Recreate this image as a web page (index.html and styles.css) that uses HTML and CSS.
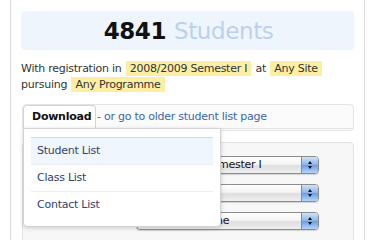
FILE: index.html
```html
<!DOCTYPE html>
<html>
<head>
<meta charset="utf-8">
<link rel="stylesheet" href="styles.css">
</head>
<body>
<div class="page">
  <div class="stat"><span class="stat-num">4841</span><span class="stat-label">Students</span></div>
  <p class="info">With registration in <span class="hl">2008/2009 Semester I</span> at <span class="hl">Any Site</span><br>pursuing <span class="hl">Any Programme</span></p>
  <div class="tabs">
    <div class="tabstrip">
      <div class="tab">Download</div>
      <a class="older">- or go to older student list page</a>
    </div>
    <div class="menu">
      <div class="menu-item active">Student List</div>
      <div class="menu-item">Class List</div>
      <div class="menu-item">Contact List</div>
    </div>
  </div>
  <div class="form">
    <span class="label">Semester</span>
    <div class="select"><span class="select-text">2008/2009 Semester I</span><span class="cap"><i class="up"></i><i class="down"></i></span></div>
    <span class="label">Site</span>
    <div class="select"><span class="select-text">Any Site</span><span class="cap"><i class="up"></i><i class="down"></i></span></div>
    <span class="label">Programme</span>
    <div class="select"><span class="select-text">Any Programme</span><span class="cap"><i class="up"></i><i class="down"></i></span></div>
  </div>
</div>
</body>
</html>
```
FILE: styles.css
```css
* { box-sizing: border-box; }
body {
  margin: 0;
  background: #fff;
  font-family: "DejaVu Sans", "Lucida Grande", sans-serif;
  font-size: 11px;
  letter-spacing: -0.25px;
  color: #333;
}
.page {
  margin-left: 10px;
  width: 355px;
  height: 240px;
  border-left: 1px solid #dcdcdc;
  border-right: 1px solid #dcdcdc;
  padding: 11px 10px 0;
  overflow: hidden;
}
.stat {
  height: 39px;
  background: #eff5fd;
  border-radius: 4px;
  display: flex;
  justify-content: center;
  align-items: center;
  gap: 8px;
  font-size: 23px;
  letter-spacing: -0.4px;
  padding-left: 2px;
}
.stat-num { font-weight: bold; color: #111; }
.stat-label { color: #b9d2ef; }
.info {
  margin: 11px 0 0;
  line-height: 16px;
  color: #333;
}
.hl {
  background: #fcefa4;
  padding: 1px 4px;
  margin: 0 1px;
}
.tabs {
  position: relative;
  margin-top: 11px;
  margin-left: 1px;
  border: 1px solid #e4e4e4;
  border-radius: 4px;
  background: #fbfbfb;
  padding-bottom: 1px;
}
.tabstrip {
  display: flex;
  height: 24px;
  border-bottom: 1px solid #e2e2e2;
}
.tab {
  width: 73px;
  height: 23px;
  background: #fff;
  border: 1px solid #d4d4d4;
  border-bottom: none;
  border-radius: 4px 4px 0 0;
  font-weight: bold;
  color: #111;
  padding-left: 8px;
  line-height: 22px;
}
.older {
  color: #3a67a8;
  line-height: 23px;
  padding-left: 1px;
}
.menu {
  position: absolute;
  top: 23px;
  left: 0;
  width: 198px;
  background: #fff;
  border: 1px solid #d2d2d2;
  border-radius: 0 0 4px 4px;
  box-shadow: 0 1px 4px rgba(0,0,0,0.18);
  padding: 8px 7px;
  z-index: 2;
}
.menu-item {
  height: 27px;
  line-height: 26px;
  padding-left: 6px;
  color: #30446a;
  border-top: 1px solid #eeeeee;
}
.menu-item.active {
  background: #f0f6fd;
  border-top-color: #c9dcf1;
}
.form {
  margin-top: 11px;
  margin-left: 1px;
  border: 1px solid #e2e2e2;
  border-radius: 4px;
  background: #f7f7f7;
  padding: 13px 0 20px 17px;
  display: grid;
  grid-template-columns: 96px 183px;
  row-gap: 10px;
  align-items: center;
}
.label { color: #333; }
.select {
  display: flex;
  height: 18px;
  border: 1px solid #8c8c8c;
  border-radius: 4px;
  background: linear-gradient(#ffffff, #f4f4f4 45%, #dedede 55%, #efefef);
  box-shadow: 0 1px 1px rgba(0,0,0,0.15);
  overflow: hidden;
}
.select-text {
  flex: 1;
  padding-left: 7px;
  line-height: 16px;
  color: #111;
  white-space: nowrap;
}
.cap {
  width: 17px;
  display: flex;
  flex-direction: column;
  align-items: center;
  justify-content: center;
  gap: 2px;
  border-left: 1px solid #6a8dc2;
  background: linear-gradient(#cfe2f9, #8db6ec 48%, #6c9ee4 52%, #b4d4fa);
}
.up, .down {
  display: block;
  width: 0;
  height: 0;
  border-left: 2.5px solid transparent;
  border-right: 2.5px solid transparent;
}
.up { border-bottom: 3px solid #111; }
.down { border-top: 3px solid #111; }
```
